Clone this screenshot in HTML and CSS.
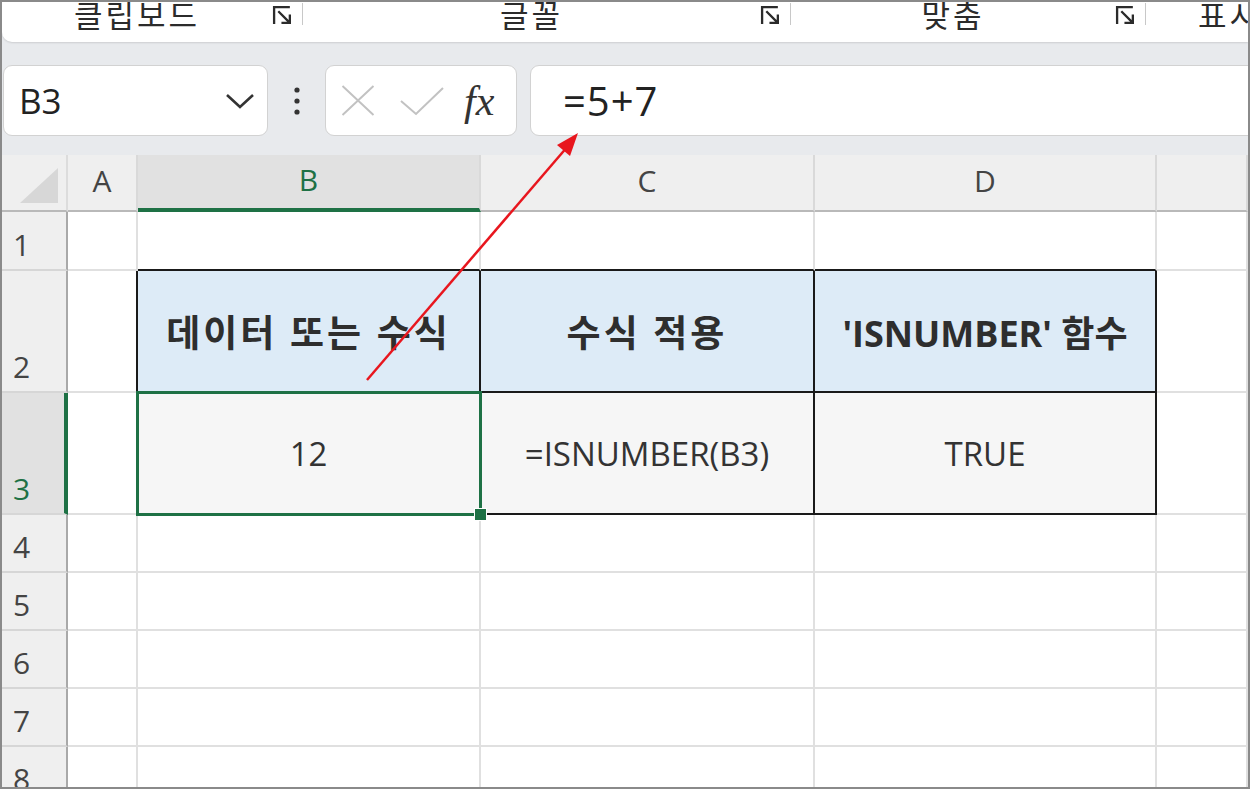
FILE: index.html
```html
<!DOCTYPE html>
<html lang="ko">
  <head>
    <meta charset="UTF-8" />
    <title>ISNUMBER 함수</title>
    <link rel="stylesheet" href="styles.css">
  </head>
  <body>
    <div class="frame">
      <div class="ribbon">
        <div class="group g1">
          <span class="group-label">클립보드</span>
          <svg class="launcher" viewBox="0 0 20 20"><path d="M2 18V2H17M6 6L17 17M17 9V17H9" /></svg>
        </div>
        <span class="sep"></span>
        <div class="group g2">
          <span class="group-label">글꼴</span>
          <svg class="launcher" viewBox="0 0 20 20"><path d="M2 18V2H17M6 6L17 17M17 9V17H9" /></svg>
        </div>
        <span class="sep"></span>
        <div class="group g3">
          <span class="group-label">맞춤</span>
          <svg class="launcher" viewBox="0 0 20 20"><path d="M2 18V2H17M6 6L17 17M17 9V17H9" /></svg>
        </div>
        <span class="sep"></span>
        <div class="group g4">
          <span class="group-label">표시 형식</span>
        </div>
      </div>

      <div class="formula-bar">
        <div class="name-box">
          <span>B3</span>
          <svg class="chevron" viewBox="0 0 28 16"><path d="M1 2L14 14L27 2" /></svg>
        </div>
        <div class="dots">
          <svg viewBox="0 0 6 28"><circle cx="3" cy="3" r="2.6" /><circle cx="3" cy="14" r="2.6" /><circle cx="3" cy="25" r="2.6" /></svg>
        </div>
        <div class="fx-box">
          <svg class="icon-x" viewBox="0 0 34 32"><path d="M1 1L33 31M33 1L1 31" /></svg>
          <svg class="icon-ok" viewBox="0 0 44 30"><path d="M1 15L16 28L43 2" /></svg>
          <span class="fx">fx</span>
        </div>
        <div class="formula-input">=5+7</div>
      </div>

      <div class="sheet">
        <div class="corner"><i class="corner-tri"></i></div>
        <div class="col-head">A</div>
        <div class="col-head is-active">B</div>
        <div class="col-head">C</div>
        <div class="col-head">D</div>
        <div class="col-head"></div>

        <div class="row-head">1</div>
        <div class="cell"></div>
        <div class="cell edge-bottom"></div>
        <div class="cell edge-bottom"></div>
        <div class="cell edge-bottom"></div>
        <div class="cell"></div>

        <div class="row-head">2</div>
        <div class="cell edge-right"></div>
        <div class="cell th th-ko">데이터 또는 수식</div>
        <div class="cell th th-ko">수식 적용</div>
        <div class="cell th">'ISNUMBER' 함수</div>
        <div class="cell"></div>

        <div class="row-head is-active">3</div>
        <div class="cell edge-right"></div>
        <div class="cell td selected">12</div>
        <div class="cell td">=ISNUMBER(B3)</div>
        <div class="cell td">TRUE</div>
        <div class="cell"></div>

        <div class="row-head">4</div>
        <div class="cell"></div><div class="cell"></div><div class="cell"></div><div class="cell"></div><div class="cell"></div>
        <div class="row-head">5</div>
        <div class="cell"></div><div class="cell"></div><div class="cell"></div><div class="cell"></div><div class="cell"></div>
        <div class="row-head">6</div>
        <div class="cell"></div><div class="cell"></div><div class="cell"></div><div class="cell"></div><div class="cell"></div>
        <div class="row-head">7</div>
        <div class="cell"></div><div class="cell"></div><div class="cell"></div><div class="cell"></div><div class="cell"></div>
        <div class="row-head">8</div>
        <div class="cell"></div><div class="cell"></div><div class="cell"></div><div class="cell"></div><div class="cell"></div>
      </div>
    </div>

    <!-- annotation arrow: B3 to the formula bar -->
    <svg class="arrow" width="1250" height="789">
      <line x1="367" y1="380" x2="568" y2="146" />
      <polygon points="578,133 570,156 557,145" />
    </svg>
  </body>
</html>
```

FILE: styles.css
```css
body {
  margin: 0;
  font-family: "Open Sans", "Noto Sans CJK KR", sans-serif;
  color: #262626;
}
.frame {
  width: 1250px;
  height: 789px;
  box-sizing: border-box;
  border: 2px solid #8a8a8a;
  background-color: #e8eaed;
  display: flex;
  flex-direction: column;
  overflow: hidden;
}

/* ribbon strip */
.ribbon {
  height: 40px;
  flex-shrink: 0;
  display: flex;
  align-items: flex-start;
  background-color: #fff;
  border-bottom-left-radius: 10px;
  box-shadow: 0 1px 2px rgba(0, 0, 0, 0.12);
  overflow: hidden;
}
.group {
  display: flex;
  align-items: flex-start;
  flex-shrink: 0;
}
.g1 {
  width: 300px;
}
.g2 {
  width: 487px;
}
.g3 {
  width: 354px;
}
.g4 {
  padding-left: 52px;
}
.group-label {
  flex: 1;
  text-align: center;
  font-family: "Noto Sans CJK KR", sans-serif;
  font-size: 31px;
  letter-spacing: 3px;
  line-height: 1;
  margin-top: -4px;
  color: #2b2b2b;
  white-space: nowrap;
}
.launcher {
  width: 21px;
  height: 21px;
  margin: 3px 9px 0 0;
  fill: none;
  stroke: #2b2b2b;
  stroke-width: 2.2;
}
.sep {
  width: 1px;
  height: 22px;
  margin-top: 1px;
  flex-shrink: 0;
  background-color: #c8c8c8;
}

/* name box and formula bar */
.formula-bar {
  display: flex;
  align-items: stretch;
  height: 71px;
  padding: 23px 0 19px 1px;
  flex-shrink: 0;
}
.name-box,
.fx-box,
.formula-input {
  background-color: #fff;
  border: 1px solid #d2d2d2;
  border-radius: 9px;
  box-sizing: border-box;
  display: flex;
  align-items: center;
}
.name-box {
  width: 265px;
  padding: 0 13px 0 15px;
  justify-content: space-between;
  font-size: 35px;
  color: #222;
}
.chevron {
  width: 28px;
  height: 16px;
  fill: none;
  stroke: #333;
  stroke-width: 2.6;
}
.dots {
  width: 57px;
  display: flex;
  justify-content: center;
  align-items: center;
}
.dots svg {
  width: 6px;
  height: 28px;
  fill: #333;
}
.fx-box {
  width: 192px;
  padding-left: 15px;
}
.icon-x {
  width: 34px;
  height: 31px;
  fill: none;
  stroke: #c2c2c2;
  stroke-width: 2;
}
.icon-ok {
  width: 44px;
  height: 30px;
  margin-left: 25px;
  fill: none;
  stroke: #c2c2c2;
  stroke-width: 2;
}
.fx {
  margin-left: 20px;
  font-family: "Liberation Serif", serif;
  font-style: italic;
  font-size: 42px;
  line-height: 1;
  color: #333;
}
.formula-input {
  flex: 1;
  margin: 0 -12px 0 13px;
  padding-left: 32px;
  font-size: 40px;
  letter-spacing: 1px;
  color: #222;
}

/* worksheet grid */
.sheet {
  flex: 1;
  display: grid;
  grid-template-columns: 66px 70px 343px 334px 342px 1fr;
  grid-template-rows: 57px 59px 122px 122px 58px 58px 58px 58px 58px;
  background-color: #fff;
  overflow: hidden;
}
.sheet > div {
  box-sizing: border-box;
}
.corner {
  background-color: #efefef;
  border-right: 2px solid #dcdcdc;
  border-bottom: 2px solid #b9b9b9;
  display: flex;
  justify-content: flex-end;
  align-items: flex-end;
  padding: 0 8px 7px 0;
}
.corner-tri {
  width: 38px;
  height: 35px;
  background-color: #d7d7d7;
  clip-path: polygon(100% 0, 100% 100%, 0 100%);
}
.col-head {
  background-color: #efefef;
  border-right: 2px solid #d9d9d9;
  border-bottom: 2px solid #b9b9b9;
  display: flex;
  justify-content: center;
  align-items: center;
  padding-bottom: 5px;
  font-size: 30px;
  color: #444;
}
.col-head.is-active {
  background-color: #e1e1e1;
  border-bottom: 4px solid #1e7145;
  color: #1e7145;
}
.row-head {
  background-color: #efefef;
  border-right: 2px solid #a9a9a9;
  border-bottom: 2px solid #d6d6d6;
  display: flex;
  align-items: flex-end;
  padding: 0 0 9px 11px;
  font-size: 30px;
  line-height: 1;
  color: #444;
}
.row-head.is-active {
  background-color: #e1e1e1;
  border-right: 4px solid #1e7145;
  color: #1e7145;
}
.cell {
  border-right: 2px solid #e0e0e0;
  border-bottom: 2px solid #e0e0e0;
  display: flex;
  justify-content: center;
  align-items: center;
  font-size: 33px;
  color: #333;
}
.edge-bottom {
  border-bottom-color: #1a1a1a;
}
.edge-right {
  border-right-color: #1a1a1a;
}
.th,
.td {
  border-right-color: #1a1a1a;
  border-bottom-color: #1a1a1a;
}
.th {
  background-color: #ddebf7;
  font-weight: 700;
  font-size: 36px;
  color: #2e2e2e;
}
.th-ko {
  font-size: 37px;
  letter-spacing: 3px;
}
.td {
  background-color: #f6f6f6;
}
.selected {
  position: relative;
  z-index: 2;
}
.selected::after {
  content: "";
  position: absolute;
  left: -2px;
  top: -2px;
  right: -3px;
  bottom: -3px;
  border: 3px solid #1e7145;
}
.selected::before {
  content: "";
  position: absolute;
  right: -8px;
  bottom: -8px;
  width: 11px;
  height: 11px;
  background-color: #1e7145;
  border: 1px solid #fff;
  z-index: 1;
}

.arrow {
  position: absolute;
  left: 0;
  top: 0;
  pointer-events: none;
}
.arrow line {
  stroke: #e8161e;
  stroke-width: 2.5;
}
.arrow polygon {
  fill: #e8161e;
}
```
